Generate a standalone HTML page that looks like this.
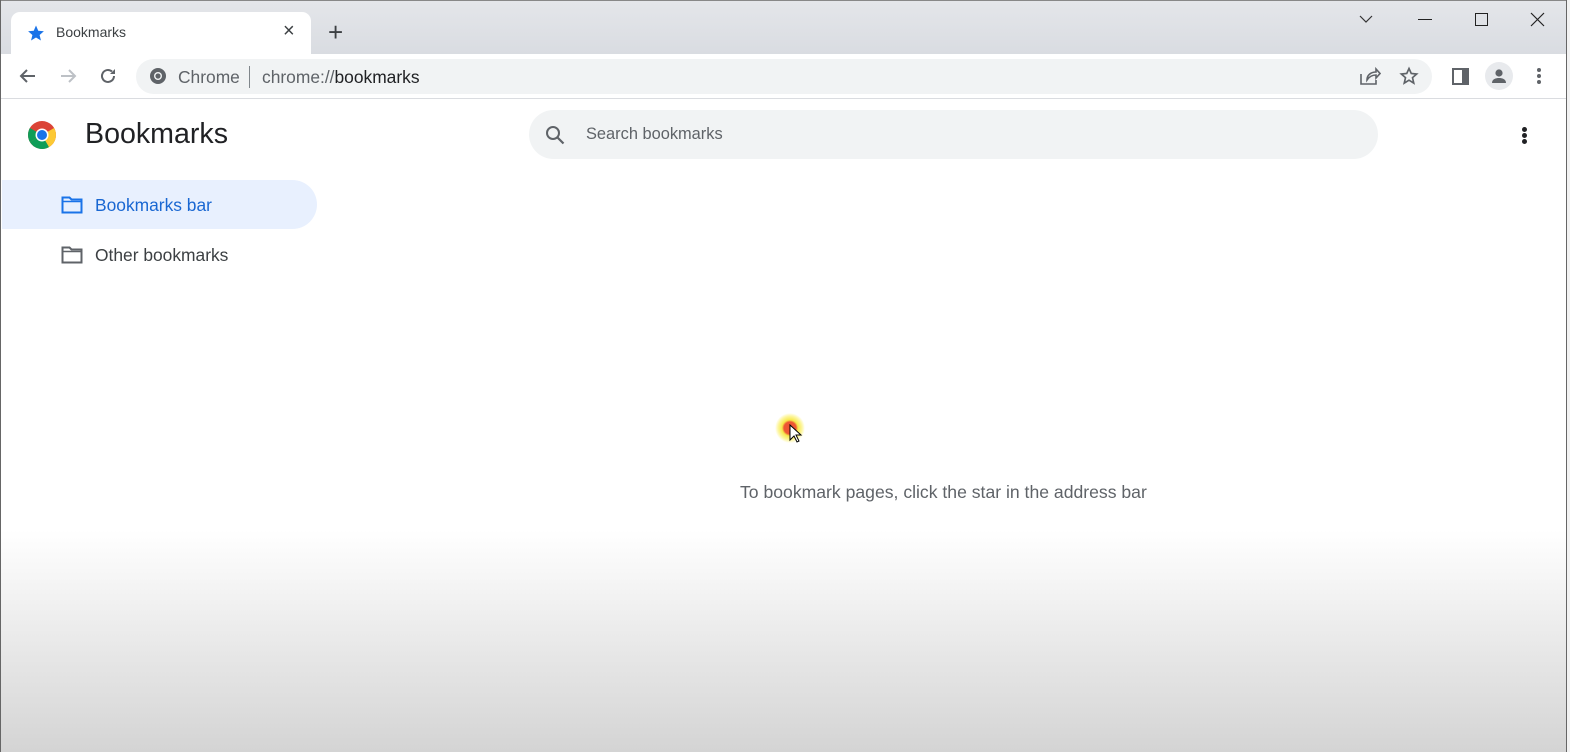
<!DOCTYPE html>
<html><head><meta charset="utf-8"><style>
*{margin:0;padding:0;box-sizing:border-box}
body{width:1570px;height:752px;overflow:hidden;font-family:"Liberation Sans",sans-serif;background:#fff;position:relative}
.abs{position:absolute}
#top{left:0;top:0;width:1570px;height:54px;background:linear-gradient(#e4e6ea,#d9dce1);border-top:1px solid #888}
#tab{left:11px;top:12px;width:300px;height:44px;background:#fff;border-radius:9px 9px 0 0}
#bar{left:0;top:54px;width:1570px;height:45px;background:#fff;border-bottom:1px solid #dadce0}
#omni{left:136px;top:59px;width:1296px;height:35px;background:#f1f3f4;border-radius:18px}
#page{left:0;top:100px;width:1570px;height:652px;background:linear-gradient(#fff 0,#fff 430px,#d4d4d4 652px)}
#lb{left:0;top:0;width:1px;height:752px;background:#666}
#rb{left:1566px;top:0;width:1px;height:752px;background:#666}
#rb2{left:1567px;top:0;width:3px;height:752px;background:#f2f2f2}
.t{position:absolute;white-space:nowrap}
</style></head><body>
<div id="top" class="abs"></div>
<div id="tab" class="abs"></div>
<svg class="abs" style="left:27px;top:24px" width="18" height="18" viewBox="0 0 24 24"><path d="M12 2l3 7 7.5.6-5.7 5 1.8 7.4L12 18l-6.6 4 1.8-7.4-5.7-5L9 9z" fill="#1a73e8"/></svg>
<div class="t" style="left:56px;top:24px;font-size:14px;color:#3c4043">Bookmarks</div>
<div class="t" style="left:283px;top:20px;font-size:20px;color:#3c4043">×</div>
<div class="t" style="left:328px;top:17px;font-size:26px;color:#3c4043;font-weight:300">+</div>
<svg class="abs" style="left:1358px;top:12px" width="16" height="14"><path d="M2 4l6 6 6-6" fill="none" stroke="#333" stroke-width="1.2"/></svg>
<div class="abs" style="left:1418px;top:19px;width:14px;height:1px;background:#222"></div>
<div class="abs" style="left:1475px;top:13px;width:13px;height:13px;border:1px solid #222"></div>
<svg class="abs" style="left:1530px;top:12px" width="15" height="15"><path d="M1 1l13 13M14 1L1 14" stroke="#222" stroke-width="1.2"/></svg>
<div id="bar" class="abs"></div>
<svg class="abs" style="left:18px;top:66px" width="20" height="20" viewBox="0 0 20 20"><path d="M17 10H4M9 4l-6 6 6 6" fill="none" stroke="#5f6368" stroke-width="2"/></svg>
<svg class="abs" style="left:58px;top:66px" width="20" height="20" viewBox="0 0 20 20"><path d="M3 10h13M11 4l6 6-6 6" fill="none" stroke="#bdc1c6" stroke-width="2"/></svg>
<svg class="abs" style="left:98px;top:66px" width="20" height="20" viewBox="0 0 20 20"><path d="M16 10a6 6 0 1 1-2-4.5" fill="none" stroke="#5f6368" stroke-width="2"/><path d="M17 3v5h-5z" fill="#5f6368"/></svg>
<div id="omni" class="abs"></div>
<svg class="abs" style="left:149px;top:67px" width="18" height="18" viewBox="0 0 18 18"><circle cx="9" cy="9" r="8" fill="#5f6368"/><circle cx="9" cy="9" r="4" fill="#f1f3f4"/><circle cx="9" cy="9" r="2.6" fill="#5f6368"/></svg>
<div class="t" style="left:178px;top:67px;font-size:17.4px;color:#5f6368">Chrome</div>
<div class="abs" style="left:249px;top:66px;width:1px;height:22px;background:#80868b"></div>
<div class="t" style="left:262px;top:67px;font-size:17.4px;color:#5f6368">chrome://<span style="color:#202124">bookmarks</span></div>
<svg class="abs" style="left:1359px;top:66px" width="22" height="20" viewBox="0 0 22 20"><path d="M2 8v10h15v-4M8 14c0-5 4-8 9-8V3l4 4.5L17 12V9c-4 0-7 2-9 5z" fill="none" stroke="#5f6368" stroke-width="1.6"/></svg>
<svg class="abs" style="left:1399px;top:66px" width="20" height="20" viewBox="0 0 24 24"><path d="M12 3l2.7 6 6.5.6-5 4.4 1.5 6.5L12 17l-5.7 3.5 1.5-6.5-5-4.4 6.5-.6z" fill="none" stroke="#5f6368" stroke-width="2"/></svg>
<div class="abs" style="left:1452px;top:68px;width:17px;height:17px;background:#5f6368"></div>
<div class="abs" style="left:1454px;top:70px;width:8px;height:13px;background:#fff"></div>
<div class="abs" style="left:1485px;top:62px;width:28px;height:28px;border-radius:50%;background:#e8eaed"></div>
<svg class="abs" style="left:1489px;top:66px" width="20" height="20" viewBox="0 0 20 20"><circle cx="10" cy="7" r="3.6" fill="#5f6368"/><path d="M3 17c0-4 4-5 7-5s7 1 7 5z" fill="#5f6368"/></svg>
<div class="abs" style="left:1537px;top:68px;width:4px;height:4px;border-radius:50%;background:#5f6368;box-shadow:0 6px 0 #5f6368,0 12px 0 #5f6368"></div>
<div id="page" class="abs"></div>
<svg class="abs" style="left:27px;top:120px" width="30" height="30" viewBox="-15 -15 30 30"><circle r="14" fill="#db4437"/><path d="M0 0L12.1-7A14 14 0 0 1 0 14L-12.1 7z" fill="#fcc934"/><path d="M0 0L-12.1 7A14 14 0 0 1-12.1-7z" fill="#0f9d58"/><path d="M0 0L-12.1 7A14 14 0 0 0 7 12.1z" fill="#0f9d58"/><circle r="6.5" fill="#fff"/><circle r="5" fill="#1a73e8"/></svg>
<div class="t" style="left:85px;top:118px;font-size:28.6px;color:#202124">Bookmarks</div>
<div class="abs" style="left:529px;top:110px;width:849px;height:49px;background:#f1f3f4;border-radius:25px"></div>
<svg class="abs" style="left:544px;top:124px" width="22" height="22" viewBox="0 0 22 22"><circle cx="9" cy="9" r="6" fill="none" stroke="#5f6368" stroke-width="2"/><path d="M13.5 13.5l6 6" stroke="#5f6368" stroke-width="2.2"/></svg>
<div class="t" style="left:586px;top:125px;font-size:16.4px;color:#5f6368">Search bookmarks</div>
<div class="abs" style="left:1522px;top:127px;width:5px;height:5px;border-radius:50%;background:#202124;box-shadow:0 6px 0 #202124,0 12px 0 #202124"></div>
<div class="abs" style="left:2px;top:180px;width:315px;height:49px;background:#e8f0fe;border-radius:0 25px 25px 0"></div>
<svg class="abs" style="left:61px;top:195px" width="22" height="20" viewBox="0 0 22 20"><path d="M1.5 2.5h7l2 2h10v13h-19z" fill="none" stroke="#1a73e8" stroke-width="2"/><path d="M1.5 6.5h19" stroke="#1a73e8" stroke-width="1.5"/></svg>
<div class="t" style="left:95px;top:195px;font-size:17.4px;color:#1967d2">Bookmarks bar</div>
<svg class="abs" style="left:61px;top:245px" width="22" height="20" viewBox="0 0 22 20"><path d="M1.5 2.5h7l2 2h10v13h-19z" fill="none" stroke="#5f6368" stroke-width="2"/><path d="M1.5 6.5h19" stroke="#5f6368" stroke-width="1.5"/></svg>
<div class="t" style="left:95px;top:245px;font-size:17.4px;color:#3c4043">Other bookmarks</div>
<div class="abs" style="left:775px;top:413px;width:30px;height:30px;border-radius:50%;background:radial-gradient(#e53 0 6px,#f7e84a 8px,#fdf6a0 12px,rgba(255,255,200,0) 15px)"></div>
<svg class="abs" style="left:789px;top:424px" width="14" height="20" viewBox="0 0 14 20"><path d="M1 1v15l4-4 3 6 2-1-3-6h5z" fill="#fff" stroke="#000" stroke-width="1"/></svg>
<div class="t" style="left:740px;top:482px;font-size:17.6px;color:#5f6368">To bookmark pages, click the star in the address bar</div>
<div id="lb" class="abs"></div>
<div id="rb" class="abs"></div>
<div id="rb2" class="abs"></div>
</body></html>
